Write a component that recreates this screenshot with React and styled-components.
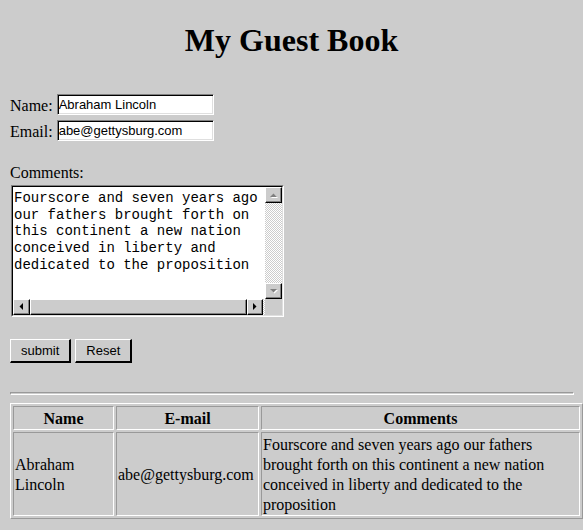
import styled, { createGlobalStyle } from "styled-components"

const GlobalStyle = createGlobalStyle`
html, body {
  background: #cccccc;
}
body {
  margin: 0;
  color: #000;
  font-family: "Liberation Serif", "Times New Roman", serif;
  font-size: 16px;
}
`

const comment =
  "Fourscore and seven years ago our fathers brought forth on this continent a new nation conceived in liberty and dedicated to the proposition"

const textareaValue =
  "Fourscore and seven years ago\nour fathers brought forth on\nthis continent a new nation\nconceived in liberty and\ndedicated to the proposition"

const Arrow = ({ dir, disabled }) => {
  const shapes = {
    up: "0,4 7,4 3.5,0.5",
    down: "0,0 7,0 3.5,3.5",
    left: "4,0 4,7 0.5,3.5",
    right: "0,0 0,7 3.5,3.5",
  }
  const vertical = dir === "up" || dir === "down"
  const w = vertical ? 8 : 5
  const h = vertical ? 5 : 8
  return (
    <svg width={w} height={h} viewBox={`0 0 ${w} ${h}`}>
      {disabled && <polygon points={shapes[dir]} fill="#fff" transform="translate(1 1)" />}
      <polygon points={shapes[dir]} fill={disabled ? "#808080" : "#000"} />
    </svg>
  )
}

const App = () => {
  return (
    <Page>
      <GlobalStyle />
      <Title>My Guest Book</Title>

      <FieldRow $top={35}>
        <Label>Name:</Label>
        <TextInput defaultValue="Abraham Lincoln" />
      </FieldRow>
      <FieldRow $top={5}>
        <Label>Email:</Label>
        <TextInput defaultValue="abe@gettysburg.com" />
      </FieldRow>

      <CommentsLabel>Comments:</CommentsLabel>
      <TextBox>
        <TextInner>
          <CommentArea defaultValue={textareaValue} wrap="off" spellCheck={false} />
          <VScroll>
            <ScrollButton $h={16}><Arrow dir="up" disabled /></ScrollButton>
            <Track />
            <ScrollButton $h={16}><Arrow dir="down" disabled /></ScrollButton>
          </VScroll>
          <HScroll>
            <ScrollButton $w={17}><Arrow dir="left" /></ScrollButton>
            <Thumb />
            <ScrollButton $w={16}><Arrow dir="right" /></ScrollButton>
            <Track $size={2} />
          </HScroll>
          <Corner />
        </TextInner>
      </TextBox>

      <ButtonRow>
        <FormButton type="button">submit</FormButton>
        <FormButton type="button">Reset</FormButton>
      </ButtonRow>

      <Rule />

      <GuestTable>
        <thead>
          <tr>
            <HeadCell $w={101}>Name</HeadCell>
            <HeadCell $w={143}>E-mail</HeadCell>
            <HeadCell>Comments</HeadCell>
          </tr>
        </thead>
        <tbody>
          <tr>
            <Cell>Abraham Lincoln</Cell>
            <Cell $nowrap>abe@gettysburg.com</Cell>
            <Cell>{comment}</Cell>
          </tr>
        </tbody>
      </GuestTable>
    </Page>
  )
}

const Page = styled.div`
padding: 0 10px 10px;
`
const Title = styled.h1`
margin: 22px 0 0;
font-size: 32px;
line-height: 37px;
font-weight: bold;
text-align: center;
`
const FieldRow = styled.div`
display: flex;
align-items: flex-end;
gap: 4px;
height: 21px;
margin-top: ${p => p.$top}px;
`
const Label = styled.span`
line-height: 18px;
`
const TextInput = styled.input`
box-sizing: border-box;
width: 157px;
height: 21px;
margin: 0;
padding: 0 1px;
font: 13px "Liberation Sans", Arial, sans-serif;
color: #000;
background: #fff;
border: 1px solid;
border-color: #808080 #fff #fff #808080;
box-shadow: inset 1px 1px 0 #000, inset -1px -1px 0 #dfdfdf;
outline: none;
`
const CommentsLabel = styled.div`
margin-top: 23px;
line-height: 18px;
`
const TextBox = styled.div`
box-sizing: border-box;
width: 273px;
height: 132px;
margin: 3px 0 0 1px;
border: 1px solid;
border-color: #808080 #fff #fff #808080;
`
const TextInner = styled.div`
box-sizing: border-box;
height: 100%;
border: 1px solid;
border-color: #000 #dfdfdf #dfdfdf #000;
display: grid;
grid-template-columns: 1fr 17px;
grid-template-rows: 1fr 16px;
`
const CommentArea = styled.textarea`
box-sizing: border-box;
width: 100%;
height: 100%;
margin: 0;
padding: 3px 0 0 1px;
border: none;
outline: none;
resize: none;
overflow: hidden;
background: #fff;
color: #000;
font: 14px/16.7px "Liberation Mono", "Courier New", monospace;
`
const VScroll = styled.div`
display: flex;
flex-direction: column;
`
const HScroll = styled.div`
display: flex;
`
const ScrollButton = styled.div`
box-sizing: border-box;
flex: none;
width: ${p => (p.$w ? `${p.$w}px` : "auto")};
height: ${p => (p.$h ? `${p.$h}px` : "auto")};
background: #cccccc;
border: 1px solid;
border-color: #fff #000 #000 #fff;
box-shadow: inset -1px -1px 0 #808080;
display: flex;
align-items: center;
justify-content: center;
`
const Thumb = styled(ScrollButton)`
flex: 1;
`
const Track = styled.div`
flex: ${p => (p.$size ? `0 0 ${p.$size}px` : "1")};
background: repeating-conic-gradient(#fff 0 25%, #cccccc 0 50%) 0 0 / 2px 2px;
`
const Corner = styled.div`
background: #cccccc;
`
const ButtonRow = styled.div`
display: flex;
gap: 4px;
margin-top: 22px;
`
const FormButton = styled.button`
box-sizing: border-box;
height: 24px;
margin: 0;
padding: 0 10px;
font: 13px "Liberation Sans", Arial, sans-serif;
color: #000;
background: #cccccc;
border-style: solid;
border-width: 1px 2px 2px 1px;
border-color: #fff #000 #000 #fff;
`
const Rule = styled.hr`
box-sizing: content-box;
width: 562px;
height: 1px;
margin: 29px 0 0;
border: 1px solid;
border-color: #999 #fff #fff #999;
`
const GuestTable = styled.table`
margin-top: 8px;
width: 573px;
table-layout: fixed;
border-collapse: separate;
border-spacing: 2px;
border: 1px solid;
border-color: #fff #999 #999 #fff;
font-size: 16px;
`
const HeadCell = styled.th`
box-sizing: border-box;
width: ${p => (p.$w ? `${p.$w}px` : "auto")};
padding: 2px 1px 0;
line-height: 20px;
font-weight: bold;
text-align: center;
border: 1px solid;
border-color: #999 #fff #fff #999;
`
const Cell = styled.td`
box-sizing: border-box;
padding: 2px 1px 0;
line-height: 20px;
vertical-align: middle;
white-space: ${p => (p.$nowrap ? "nowrap" : "normal")};
border: 1px solid;
border-color: #999 #fff #fff #999;
`
export default App
